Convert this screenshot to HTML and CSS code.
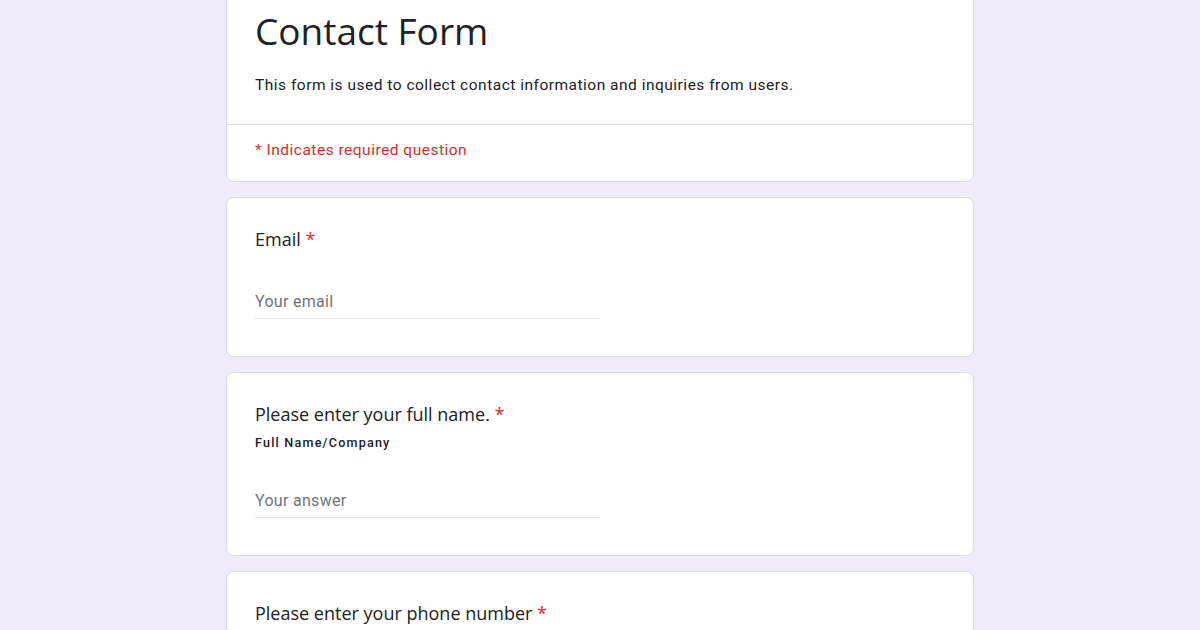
FILE: index.html
```html
<!DOCTYPE html>
<html lang="en">
<head>
<meta charset="utf-8">
<title>Contact Form</title>
<link rel="stylesheet" href="styles.css">
</head>
<body>
<main class="form">
  <section class="card header-card">
    <div class="header-top">
      <h1 class="form-title">Contact Form</h1>
      <p class="form-desc">This form is used to collect contact information and inquiries from users.</p>
    </div>
    <div class="header-bottom">
      <span class="required-note">* Indicates required question</span>
    </div>
  </section>

  <section class="card question">
    <div class="q-title">Email <span class="star">*</span></div>
    <div class="field"><span class="placeholder">Your email</span></div>
  </section>

  <section class="card question">
    <div class="q-title">Please enter your full name. <span class="star">*</span></div>
    <div class="q-sub">Full Name/Company</div>
    <div class="field"><span class="placeholder">Your answer</span></div>
  </section>

  <section class="card question">
    <div class="q-title">Please enter your phone number <span class="star">*</span></div>
    <div class="field"><span class="placeholder">Your answer</span></div>
  </section>
</main>
</body>
</html>
```

FILE: styles.css
```css
html, body {
  margin: 0;
  padding: 0;
}
body {
  background: #f0ebf8;
  font-family: Roboto, "Liberation Sans", sans-serif;
  color: #202124;
  overflow: hidden;
}
.form {
  width: 748px;
  margin: -20px auto 0;
  display: flex;
  flex-direction: column;
  gap: 15px;
}
.card {
  background: #fff;
  border: 1px solid #dadce0;
  border-radius: 8px;
  box-sizing: border-box;
}
.header-top {
  padding: 26px 28px 28px;
  border-bottom: 1px solid #dadce0;
}
.form-title {
  margin: 0;
  font-family: "Open Sans", sans-serif;
  font-weight: 400;
  font-size: 37px;
  line-height: 48px;
  color: #202124;
}
.form-desc {
  margin: 19px 0 0;
  font-size: 15.5px;
  line-height: 22px;
  letter-spacing: 0.5px;
  color: #202124;
}
.header-bottom {
  padding: 14px 28px 20px;
}
.required-note {
  font-size: 15.5px;
  line-height: 22px;
  letter-spacing: 0.5px;
  color: #d93025;
}
.question {
  padding: 28px;
}
.q-title {
  font-family: "Open Sans", sans-serif;
  font-size: 18px;
  line-height: 26px;
  color: #202124;
}
.star {
  color: #d93025;
}
.q-sub {
  margin-top: 7px;
  font-size: 12.6px;
  font-weight: 500;
  line-height: 17px;
  letter-spacing: 1.2px;
  color: #202124;
}
.field {
  margin-top: 40px;
  width: 345px;
  padding-bottom: 6px;
  border-bottom: 1px solid #e6e6e6;
  margin-bottom: 9px;
}
.placeholder {
  display: block;
  font-size: 16px;
  line-height: 20px;
  letter-spacing: 0.3px;
  color: #70757a;
}
```
